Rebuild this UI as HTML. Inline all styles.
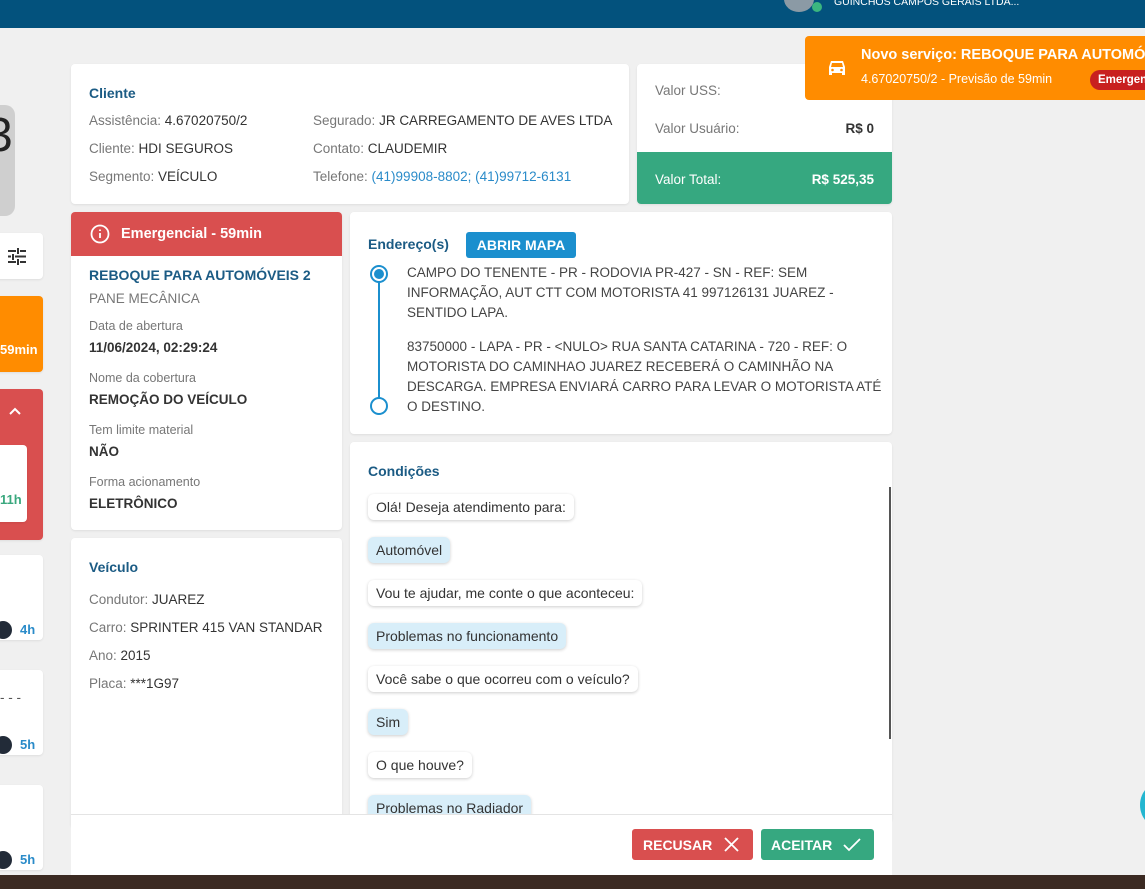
<!DOCTYPE html>
<html><head><meta charset="utf-8"><style>
*{box-sizing:border-box;margin:0;padding:0}
body{width:1145px;height:889px;overflow:hidden;background:#f0f0f0;font-family:"Liberation Sans",sans-serif;font-size:13.5px;color:#333;position:relative}
.a{position:absolute}
.card{position:absolute;background:#fff;border-radius:4px;box-shadow:0 1px 2px rgba(0,0,0,.08)}
.h{color:#1b5b84;font-weight:bold;font-size:14px}
.g{color:#777}
.lbl{color:#777;font-size:12.5px}
.b{font-weight:bold;color:#333}
.bub{position:absolute;left:18px;padding:5px 8px;border-radius:6px;background:#fff;box-shadow:0 1px 3px rgba(0,0,0,.2);font-size:14px;color:#333;white-space:nowrap}
.bub.u{background:#d8eef9}
</style></head><body>
<div class="a" style="left:0;top:0;width:1145px;height:28px;background:#03527d"></div>
<div class="a" style="left:784px;top:-14px;width:30px;height:26px;border-radius:50%;background:#8b9aa5"></div>
<div class="a" style="left:812px;top:2px;width:10px;height:10px;border-radius:50%;background:#3bb67f"></div>
<div class="a" style="left:834px;top:-4px;color:#fff;font-size:10.5px">GUINCHOS CAMPOS GERAIS LTDA...</div>

<!-- sidebar -->
<div class="a" style="left:-20px;top:105px;width:35px;height:111px;border-radius:10px;background:#cfcfcf"></div>
<div class="a" style="left:-14px;top:108px;font-size:48px;color:#222">3</div>
<div class="card" style="left:-10px;top:233px;width:53px;height:46px"></div>
<svg class="a" style="left:8px;top:248px" width="18" height="17" viewBox="0 0 18 17" stroke="#333" stroke-width="2"><path d="M0 3h8M12 3h6M10 0v6M0 8.5h3M7 8.5h11M5 6v6M0 14h8M12 14h6M10 11v6"/></svg>
<div class="card" style="left:-10px;top:296px;width:53px;height:76px;background:#ff8c00"></div>
<div class="a" style="left:0;top:342px;color:#fff;font-weight:bold;font-size:13px">59min</div>
<div class="card" style="left:-10px;top:389px;width:53px;height:151px;background:#d94f4f"></div>
<svg class="a" style="left:9px;top:407px" width="12" height="8" fill="none" stroke="#fff" stroke-width="2"><path d="M1 7l5-5 5 5"/></svg>
<div class="card" style="left:-10px;top:445px;width:37px;height:77px"></div>
<div class="a" style="left:0;top:492px;color:#3aa87e;font-weight:bold;font-size:13px">11h</div>
<div class="card" style="left:-10px;top:555px;width:53px;height:85px"></div>
<div class="card" style="left:-10px;top:670px;width:53px;height:85px"></div>
<div class="card" style="left:-10px;top:785px;width:53px;height:85px"></div>
<div class="a" style="left:-6px;top:621px;width:18px;height:18px;border-radius:9px;background:#222b38"></div>
<div class="a" style="left:-6px;top:736px;width:18px;height:18px;border-radius:9px;background:#222b38"></div>
<div class="a" style="left:-6px;top:851px;width:18px;height:18px;border-radius:9px;background:#222b38"></div>
<div class="a" style="left:20px;top:622px;color:#2a8bc9;font-weight:bold;font-size:13px">4h</div>
<div class="a" style="left:20px;top:737px;color:#2a8bc9;font-weight:bold;font-size:13px">5h</div>
<div class="a" style="left:20px;top:852px;color:#2a8bc9;font-weight:bold;font-size:13px">5h</div>
<div class="a" style="left:0;top:690px;color:#555">- - -</div>

<!-- client -->
<div class="card" style="left:71px;top:64px;width:558px;height:140px">
 <div class="a h" style="left:18px;top:21px">Cliente</div>
 <div class="a g" style="left:18px;top:49px">Assistência: <span style="color:#333">4.67020750/2</span></div>
 <div class="a g" style="left:18px;top:77px">Cliente: <span style="color:#333">HDI SEGUROS</span></div>
 <div class="a g" style="left:18px;top:105px">Segmento: <span style="color:#333">VEÍCULO</span></div>
 <div class="a g" style="left:242px;top:49px">Segurado: <span style="color:#333">JR CARREGAMENTO DE AVES LTDA</span></div>
 <div class="a g" style="left:242px;top:77px">Contato: <span style="color:#333">CLAUDEMIR</span></div>
 <div class="a g" style="left:242px;top:105px">Telefone: <span style="color:#2a8bc9">(41)99908-8802; (41)99712-6131</span></div>
</div>
<div class="card" style="left:637px;top:64px;width:255px;height:140px;overflow:hidden">
 <div class="a g" style="left:18px;top:19px">Valor USS:</div>
 <div class="a g" style="left:18px;top:57px">Valor Usuário:</div>
 <div class="a b" style="right:18px;top:57px">R$ 0</div>
 <div class="a" style="left:0;top:88px;width:255px;height:52px;background:#36a880"></div>
 <div class="a" style="left:18px;top:108px;color:#fff">Valor Total:</div>
 <div class="a" style="right:18px;top:108px;color:#fff;font-weight:bold">R$ 525,35</div>
</div>

<!-- service -->
<div class="card" style="left:71px;top:212px;width:271px;height:318px;overflow:hidden">
 <div class="a" style="left:0;top:0;width:271px;height:44px;background:#d94f4f"></div>
 <svg class="a" style="left:19px;top:12px" width="20" height="20" viewBox="0 0 20 20" fill="none" stroke="#fff" stroke-width="1.8"><circle cx="10" cy="10" r="8.5"/><path d="M10 9v5M10 5.5v1.5"/></svg>
 <div class="a" style="left:50px;top:14px;color:#fff;font-weight:bold;font-size:14.5px">Emergencial - 59min</div>
 <div class="a h" style="left:18px;top:55px">REBOQUE PARA AUTOMÓVEIS 2</div>
 <div class="a g" style="left:18px;top:79px">PANE MECÂNICA</div>
 <div class="a lbl" style="left:18px;top:107px">Data de abertura</div>
 <div class="a b" style="left:18px;top:128px">11/06/2024, 02:29:24</div>
 <div class="a lbl" style="left:18px;top:159px">Nome da cobertura</div>
 <div class="a b" style="left:18px;top:180px">REMOÇÃO DO VEÍCULO</div>
 <div class="a lbl" style="left:18px;top:211px">Tem limite material</div>
 <div class="a b" style="left:18px;top:232px">NÃO</div>
 <div class="a lbl" style="left:18px;top:263px">Forma acionamento</div>
 <div class="a b" style="left:18px;top:284px">ELETRÔNICO</div>
</div>
<div class="card" style="left:71px;top:538px;width:271px;height:290px">
 <div class="a h" style="left:18px;top:21px">Veículo</div>
 <div class="a g" style="left:18px;top:54px">Condutor: <span style="color:#333">JUAREZ</span></div>
 <div class="a g" style="left:18px;top:82px">Carro: <span style="color:#333">SPRINTER 415 VAN STANDAR</span></div>
 <div class="a g" style="left:18px;top:110px">Ano: <span style="color:#333">2015</span></div>
 <div class="a g" style="left:18px;top:138px">Placa: <span style="color:#333">***1G97</span></div>
</div>

<!-- address -->
<div class="card" style="left:350px;top:212px;width:542px;height:222px">
 <div class="a h" style="left:18px;top:24px">Endereço(s)</div>
 <div class="a" style="left:116px;top:20px;width:110px;height:26px;background:#1b8fce;border-radius:3px;color:#fff;font-weight:bold;font-size:14px;text-align:center;line-height:26px">ABRIR MAPA</div>
 <div class="a" style="left:28px;top:64px;width:2px;height:130px;background:#1b8fce"></div>
 <div class="a" style="left:20px;top:53px;width:18px;height:18px;border-radius:50%;border:2px solid #1b8fce;background:#fff"></div>
 <div class="a" style="left:24px;top:57px;width:10px;height:10px;border-radius:50%;background:#1b8fce"></div>
 <div class="a" style="left:20px;top:185px;width:18px;height:18px;border-radius:50%;border:2px solid #1b8fce;background:#fff"></div>
 <div class="a" style="left:57px;top:51px;width:480px;line-height:20px;color:#444;font-size:13.5px">CAMPO DO TENENTE - PR - RODOVIA PR-427 - SN - REF: SEM INFORMAÇÃO, AUT CTT COM MOTORISTA 41 997126131 JUAREZ - SENTIDO LAPA.</div>
 <div class="a" style="left:57px;top:125px;width:480px;line-height:20px;color:#444;font-size:13.5px">83750000 - LAPA - PR - &lt;NULO&gt; RUA SANTA CATARINA - 720 - REF: O MOTORISTA DO CAMINHAO JUAREZ RECEBERÁ O CAMINHÃO NA DESCARGA. EMPRESA ENVIARÁ CARRO PARA LEVAR O MOTORISTA ATÉ O DESTINO.</div>
</div>

<!-- conditions -->
<div class="card" style="left:350px;top:442px;width:542px;height:380px;overflow:hidden">
 <div class="a h" style="left:18px;top:21px">Condições</div>
 <div class="a" style="left:539px;top:45px;width:2px;height:252px;background:#555"></div>
 <div class="bub" style="top:52px">Olá! Deseja atendimento para:</div>
 <div class="bub u" style="top:95px">Automóvel</div>
 <div class="bub" style="top:138px">Vou te ajudar, me conte o que aconteceu:</div>
 <div class="bub u" style="top:181px">Problemas no funcionamento</div>
 <div class="bub" style="top:224px">Você sabe o que ocorreu com o veículo?</div>
 <div class="bub u" style="top:267px">Sim</div>
 <div class="bub" style="top:310px">O que houve?</div>
 <div class="bub u" style="top:353px">Problemas no Radiador</div>
</div>

<!-- footer -->
<div class="a" style="left:71px;top:814px;width:821px;height:61px;background:#fff;border-top:1px solid #e4e4e4"></div>
<div class="a" style="left:632px;top:829px;width:121px;height:31px;background:#d94f4f;border-radius:3px;color:#fff;font-weight:bold;font-size:14px;line-height:32px;padding-left:11px">RECUSAR</div>
<svg class="a" style="left:724px;top:837px" width="15" height="15" stroke="#fff" stroke-width="1.8"><path d="M1 1l13 13M14 1L1 14"/></svg>
<div class="a" style="left:761px;top:829px;width:113px;height:31px;background:#36a880;border-radius:3px;color:#fff;font-weight:bold;font-size:14px;line-height:32px;padding-left:10px">ACEITAR</div>
<svg class="a" style="left:843px;top:838px" width="18" height="14" fill="none" stroke="#fff" stroke-width="1.8"><path d="M1 7l5 5L17 1"/></svg>
<div class="a" style="left:0;top:875px;width:1145px;height:14px;background:#3b2a22"></div>
<div class="a" style="left:1140px;top:780px;width:50px;height:50px;border-radius:50%;background:#24b6d0"></div>

<!-- notification -->
<div class="a" style="left:805px;top:36px;width:345px;height:64px;background:#ff8c00;border-radius:4px"></div>
<svg class="a" style="left:827px;top:58px" width="20" height="20" viewBox="0 0 20 20" fill="#fff"><path d="M4 3h12l2 6v8h-3v-2H5v2H2V9zM5 5l-1 4h12l-1-4z"/><circle cx="5.5" cy="12" r="1.3" fill="#ff8c00"/><circle cx="14.5" cy="12" r="1.3" fill="#ff8c00"/></svg>
<div class="a" style="left:861px;top:47px;color:#fff;font-weight:bold;font-size:14.5px;white-space:nowrap">Novo serviço: REBOQUE PARA AUTOMÓVEIS</div>
<div class="a" style="left:861px;top:72px;color:#fff;font-size:12.5px">4.67020750/2 - Previsão de 59min</div>
<div class="a" style="left:1090px;top:70px;width:70px;height:20px;background:#c8201f;border-radius:10px;color:#fff;font-weight:bold;font-size:11.5px;line-height:20px;padding-left:8px">Emergencial</div>
</body></html>
